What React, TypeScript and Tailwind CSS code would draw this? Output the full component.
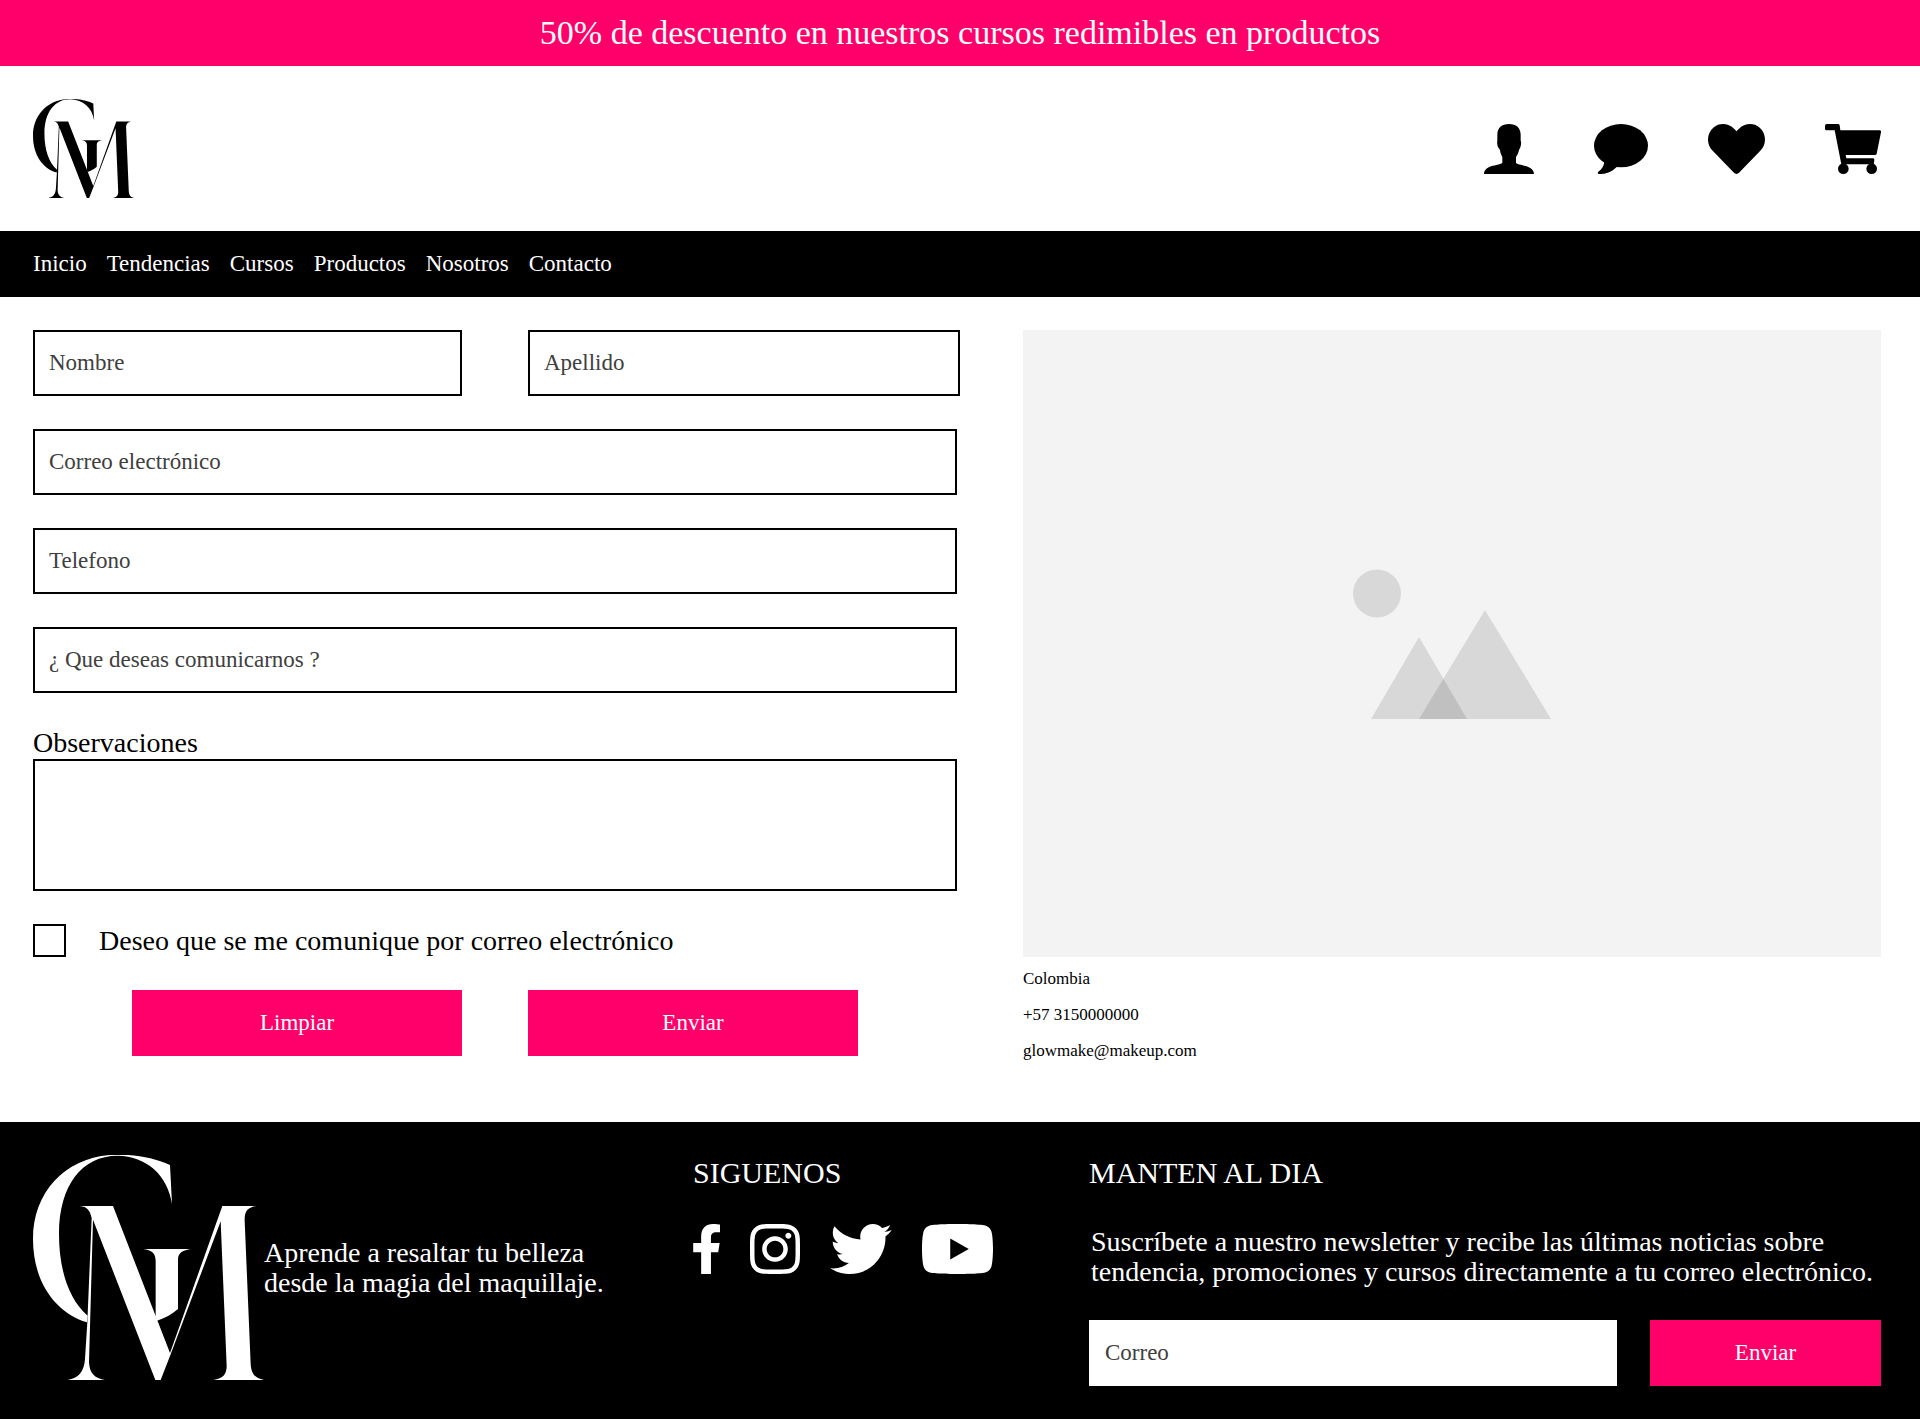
import { useState } from "react";
import { FaFacebookF, FaHeart, FaInstagram, FaTwitter, FaYoutube } from "react-icons/fa";

function Logo({ className }: { className: string }) {
  return (
    <svg viewBox="24 18 693 675" fill="currentColor" className={className} role="img" aria-label="Glow Makeup">
      <path d="M441 165L435 48C390 28 340 17 278 17C130 17 24 122 24 270C24 400 92 492 186 520L188 500C130 450 102 360 102 255C102 110 170 20 278 20C365 22 428 78 441 165Z" />
      <path d="M355 300H497C475 304 459 310 459 332V480C440 497 420 507 396 515L390 500H392V337C392 312 380 304 355 300Z" />
      <path d="M165 171H264L435 612L592 171H694C670 175 658 185 659 215L677 645C679 675 690 688 717 693H565C595 688 605 675 605 650L587 217L435 621L407 693H391L204 212L192 640C194 675 210 688 240 693H128C160 687 177 670 180 630L187 520L200 207C195 185 187 173 165 171Z" />
    </svg>
  );
}

function UserIcon() {
  return (
    <svg viewBox="129 102 150 150" fill="currentColor" className="h-[50px]" aria-hidden="true">
      <path d="M204 102c-22 0-35 12-35 32v18c-1 3-1 11 2 20c3 4 5 5 6 9c1 9 4 15 7 20v17c-2 5-20 6-34 11c-14 5-21 13-21 23h150c0-10-8-18-22-23c-14-5-30-6-32-11v-17c4-5 7-12 9-20c1-4 3-5 4-9c3-9 3-16 1-20v-18c0-20-13-32-35-32z" />
    </svg>
  );
}

function ChatIcon() {
  return (
    <svg viewBox="459 102 162 150" fill="currentColor" className="h-[50px]" aria-hidden="true">
      <ellipse cx="540" cy="167" rx="81" ry="65" />
      <path d="M490 212c0 15-8 26-18 33c-3 3-2 7 2 7c20 0 38-6 54-22z" />
    </svg>
  );
}

function CartIcon() {
  return (
    <svg viewBox="1155 102 168 150" fill="currentColor" className="h-[50px]" aria-hidden="true">
      <path d="M1160 102h34q4 0 5 4l2 15h118q5 0 4 6l-13 64q-1 4-5 4h-88l2 10h79q6 0 5 6l-2 12h-97l-20-102h-24q-5 0-5-5v-9q0-5 5-5z" />
      <circle cx="1210" cy="236" r="16" />
      <circle cx="1295" cy="236" r="16" />
    </svg>
  );
}

function PlaceholderImage() {
  return (
    <div className="flex h-[627px] items-center justify-center bg-[#f3f3f3]">
      <svg viewBox="0 0 198 150" className="h-[150px] w-[198px]" fill="#000" fillOpacity="0.11" role="img" aria-label="Imagen">
        <circle cx="24" cy="24.5" r="24" />
        <path d="M18 150L66 68L114 150Z" />
        <path d="M66 150L132 41L198 150Z" />
      </svg>
    </div>
  );
}

const navItems = ["Inicio", "Tendencias", "Cursos", "Productos", "Nosotros", "Contacto"];

const fieldClass =
  "h-[66px] w-full min-w-0 border-2 border-black bg-white px-3.5 text-[23px] text-black placeholder:text-[#404040] placeholder:opacity-100";
const buttonClass = "h-[66px] min-w-0 bg-[#ff006b] text-[23px] text-white";

export default function App() {
  const [agree, setAgree] = useState(false);

  return (
    <div className="bg-white font-['Liberation_Serif',serif] text-black">
      <p className="flex min-h-[66px] items-center justify-center bg-[#ff006b] text-[34px] leading-10 text-white">
        50% de descuento en nuestros cursos redimibles en productos
      </p>

      <header className="flex items-center justify-between py-[33px] pr-[39px] pl-[33px]">
        <a href="#inicio">
          <Logo className="h-[99px]" />
        </a>
        <div className="flex items-center gap-[60px]">
          <a href="#perfil" aria-label="Perfil"><UserIcon /></a>
          <a href="#mensajes" aria-label="Mensajes"><ChatIcon /></a>
          <a href="#favoritos" aria-label="Favoritos">
            <FaHeart viewBox="0 32 512 448" className="h-[50px] w-[57px]" />
          </a>
          <a href="#carrito" aria-label="Carrito"><CartIcon /></a>
        </div>
      </header>

      <nav className="flex min-h-[66px] items-center gap-5 bg-black px-[33px] text-[23px] text-white">
        {navItems.map((item) => (
          <a key={item} href={`#${item.toLowerCase()}`}>{item}</a>
        ))}
      </nav>

      <main className="grid grid-cols-[927fr_858fr] gap-[63px] pt-[33px] pr-[39px] pb-[53px] pl-[33px]">
        <form onSubmit={(e) => e.preventDefault()} onReset={() => setAgree(false)}>
          <div className="grid grid-cols-[429fr_432fr] gap-[66px]">
            <input aria-label="Nombre" placeholder="Nombre" className={fieldClass} />
            <input aria-label="Apellido" placeholder="Apellido" className={fieldClass} />
          </div>
          <div className="mt-[33px] mr-[3px] flex flex-col gap-[33px]">
            <input type="email" aria-label="Correo electrónico" placeholder="Correo electrónico" className={fieldClass} />
            <input type="tel" aria-label="Telefono" placeholder="Telefono" className={fieldClass} />
            <input aria-label="¿ Que deseas comunicarnos ?" placeholder="¿ Que deseas comunicarnos ?" className={fieldClass} />
            <div className="flex flex-col">
              <label htmlFor="observaciones" className="text-[28px] leading-[33px]">Observaciones</label>
              <textarea id="observaciones" className="h-[132px] resize-none border-2 border-black bg-white px-3.5 py-2 text-[23px]" />
            </div>
            <div className="flex items-center gap-[33px]">
              <input
                id="comunicar"
                type="checkbox"
                checked={agree}
                onChange={(e) => setAgree(e.target.checked)}
                className="size-[33px] appearance-none border-2 border-black bg-white checked:bg-[#ff006b]"
              />
              <label htmlFor="comunicar" className="text-[28px] leading-[30px]">
                Deseo que se me comunique por correo electrónico
              </label>
            </div>
            <div className="grid grid-cols-2 gap-[66px] px-[99px]">
              <button type="reset" className={buttonClass}>Limpiar</button>
              <button type="submit" className={buttonClass}>Enviar</button>
            </div>
          </div>
        </form>

        <section>
          <PlaceholderImage />
          <address className="mt-1 text-[17px] leading-9 not-italic">
            <p>Colombia</p>
            <p>+57 3150000000</p>
            <p>glowmake@makeup.com</p>
          </address>
        </section>
      </main>

      <footer className="grid grid-cols-[660fr_396fr_792fr] bg-black pt-[33px] pr-[39px] pb-[33px] pl-[33px] text-white">
        <div className="flex items-center self-start">
          <Logo className="h-[225px] shrink-0" />
          <p className="text-[28px] leading-[30px]">
            Aprende a resaltar tu belleza
            <br />
            desde la magia del maquillaje.
          </p>
        </div>

        <section>
          <h2 className="text-[30px] leading-9">SIGUENOS</h2>
          <div className="mt-[33px] flex items-center gap-[30px]">
            <a href="#facebook" aria-label="Facebook">
              <FaFacebookF viewBox="22 0 274 512" className="h-[50px] w-[27px]" />
            </a>
            <a href="#instagram" aria-label="Instagram">
              <FaInstagram viewBox="0 32 448 448" className="size-[50px]" />
            </a>
            <a href="#twitter" aria-label="Twitter">
              <FaTwitter viewBox="0 48 512 416" className="h-[50px] w-[62px]" />
            </a>
            <a href="#youtube" aria-label="YouTube">
              <FaYoutube viewBox="15 64 546 384" className="h-[50px] w-[71px]" />
            </a>
          </div>
        </section>

        <section>
          <h2 className="text-[30px] leading-9">MANTEN AL DIA</h2>
          <p className="mt-9 pl-0.5 text-[28px] leading-[30px]">
            Suscríbete a nuestro newsletter y recibe las últimas noticias sobre
            <br />
            tendencia, promociones y cursos directamente a tu correo electrónico.
          </p>
          <form className="mt-[33px] grid grid-cols-[528fr_231fr] gap-[33px]" onSubmit={(e) => e.preventDefault()}>
            <input
              type="email"
              aria-label="Correo"
              placeholder="Correo"
              className="h-[66px] min-w-0 bg-white px-4 text-[23px] text-black placeholder:text-[#404040] placeholder:opacity-100"
            />
            <button type="submit" className={buttonClass}>Enviar</button>
          </form>
        </section>
      </footer>
    </div>
  );
}
